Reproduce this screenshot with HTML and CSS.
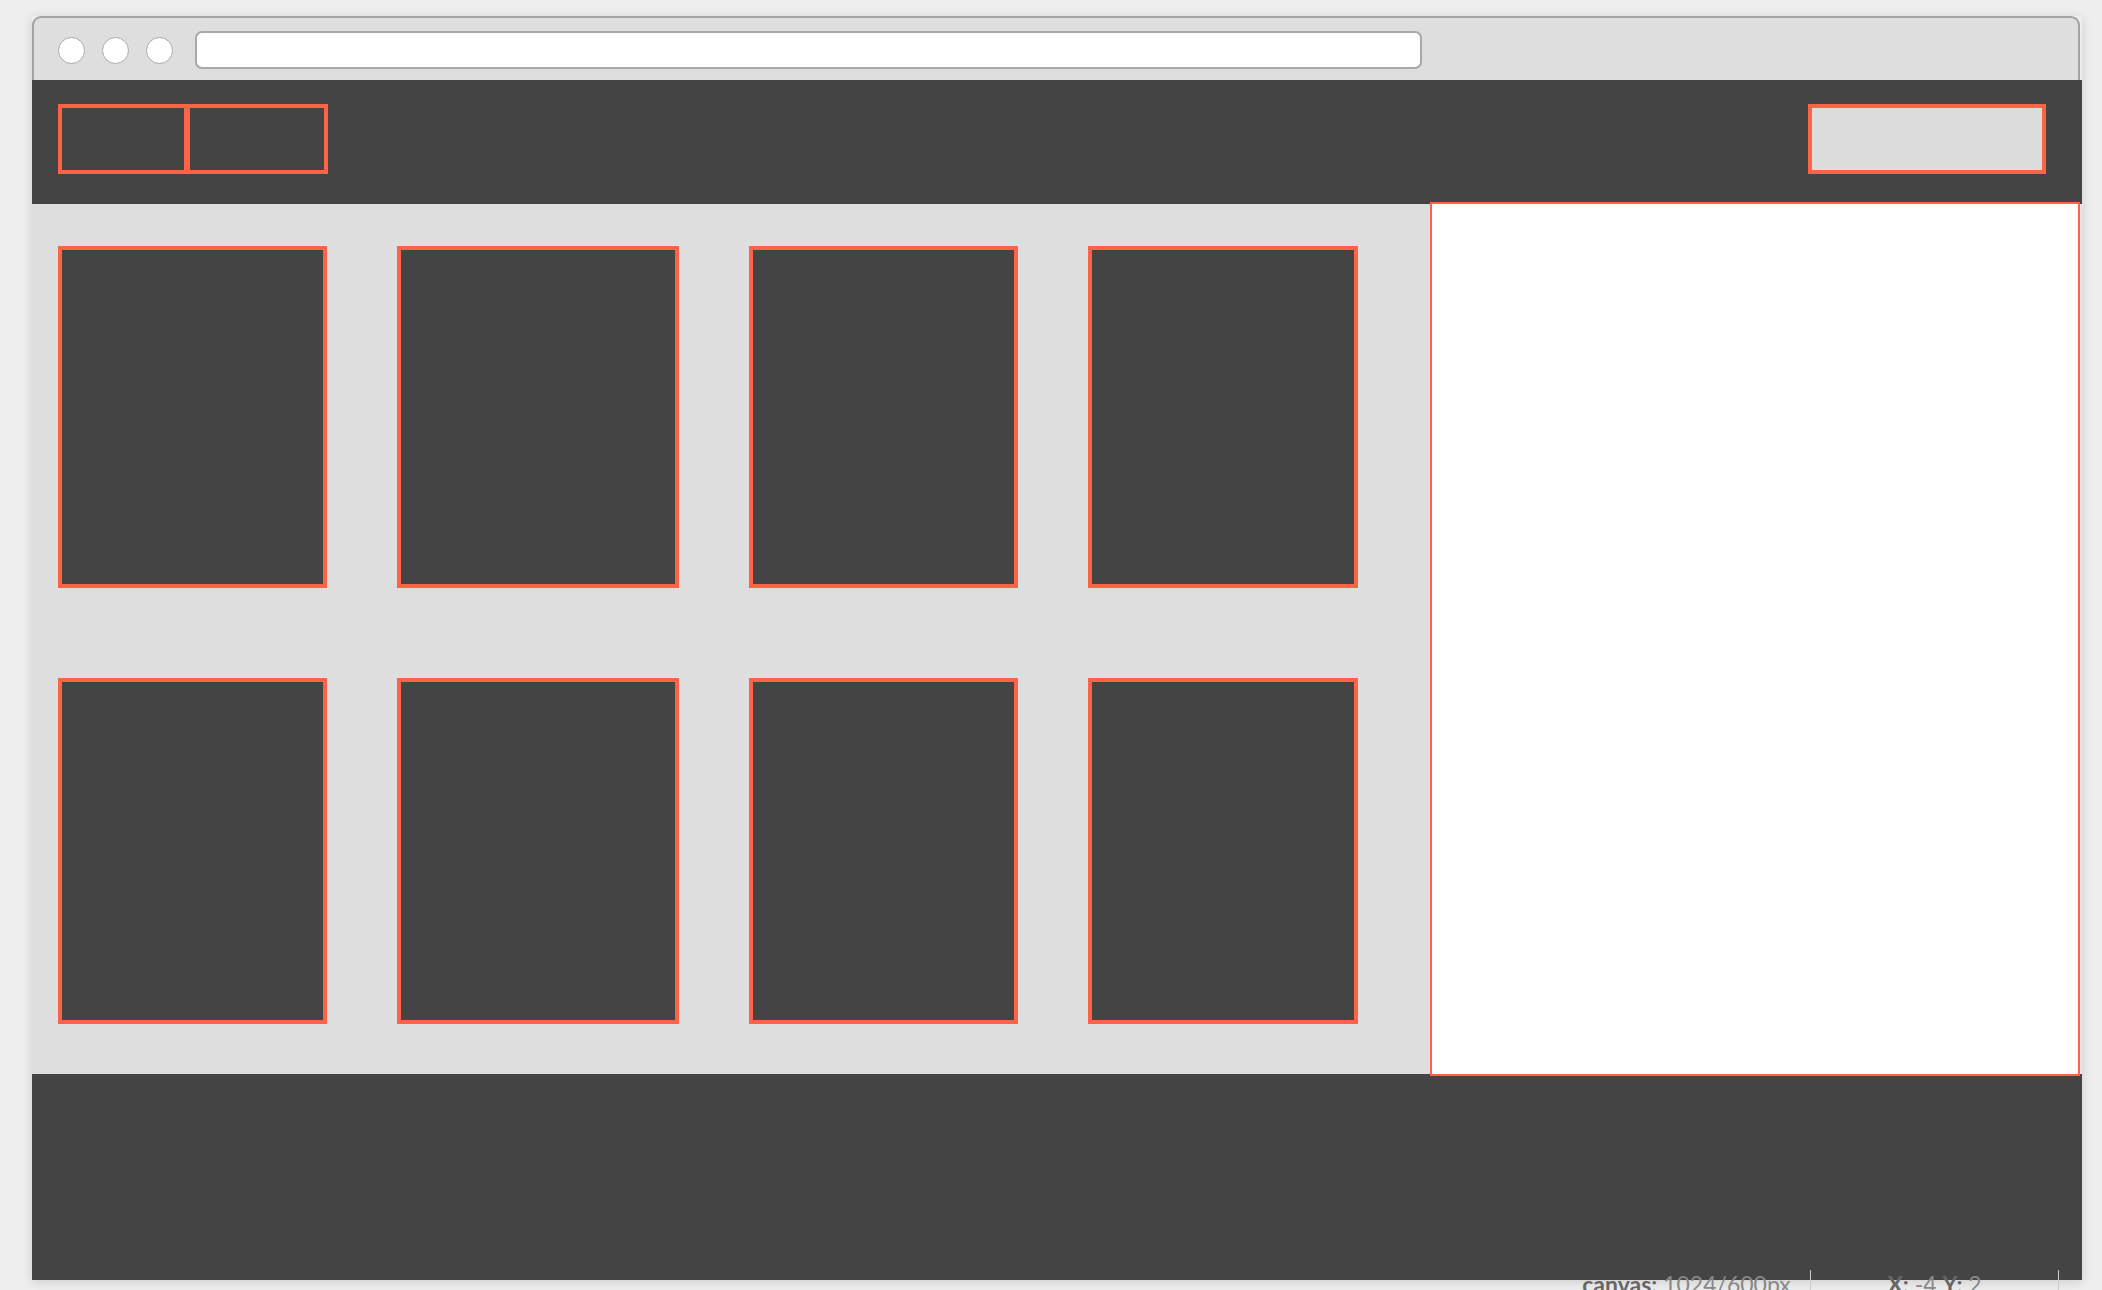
FILE: index.html
```html
<!DOCTYPE html>
<html lang="en">
  <head>
    <meta charset="UTF-8" />
    <title>Wireframe</title>
    <link rel="stylesheet" href="styles.css">
  </head>
  <body>
    <div class="window">
      <div class="titlebar">
        <span class="dot"></span>
        <span class="dot"></span>
        <span class="dot"></span>
        <div class="address"></div>
      </div>

      <header class="topbar">
        <nav class="tabs">
          <span class="tab"></span>
          <span class="tab second"></span>
        </nav>
        <span class="action"></span>
      </header>

      <div class="content">
        <main class="grid">
          <div class="card"></div>
          <div class="card"></div>
          <div class="card"></div>
          <div class="card"></div>
          <div class="card"></div>
          <div class="card"></div>
          <div class="card"></div>
          <div class="card"></div>
        </main>
        <aside class="panel"></aside>
      </div>

      <footer class="bottom"></footer>
    </div>

    <div class="status">
      <span class="status-item"><b>canvas:</b> 1024/600px</span>
      <span class="status-item"><b>X:</b> -4 <b>Y:</b> 2</span>
    </div>
  </body>
</html>
```

FILE: styles.css
```css
* {
  margin: 0;
  padding: 0;
  box-sizing: border-box;
}

html,
body {
  height: 100%;
  overflow: hidden;
  background: #eeeeee;
  font-family: Lato, "Open Sans", sans-serif;
}

.window {
  width: 2050px;
  margin: 16px 0 0 32px;
  box-shadow: 0 2px 10px rgba(0, 0, 0, 0.14);
}

.titlebar {
  display: flex;
  align-items: center;
  width: 2048px;
  height: 64px;
  padding: 2px 0 0 24px;
  background: #dedede;
  border: 2px solid #a3a3a3;
  border-bottom: none;
  border-radius: 9px 9px 0 0;
}

.dot {
  width: 27px;
  height: 27px;
  margin-right: 17px;
  background: white;
  border: 1.5px solid #aaaaaa;
  border-radius: 50%;
}

.dot:nth-child(3) {
  margin-right: 22px;
}

.address {
  width: 1227px;
  height: 38px;
  background: white;
  border: 2px solid #a8a8a8;
  border-radius: 7px;
}

.topbar {
  display: flex;
  justify-content: space-between;
  align-items: flex-start;
  height: 124px;
  padding: 24px 36px 0 26px;
  background: #444444;
}

.tabs {
  display: flex;
}

.tab {
  width: 130px;
  height: 70px;
  border: 4px solid #ff6347;
}

.tab.second {
  width: 142px;
  margin-left: -2px;
}

.action {
  width: 238px;
  height: 70px;
  background: #dcdcdc;
  border: 4px solid #ff6347;
}

.content {
  display: flex;
  height: 870px;
  background: #e6e6e6;
}

.grid {
  flex: 1;
  display: grid;
  grid-template-columns: 269px 282px 269px 270px;
  grid-template-rows: 342px 346px;
  column-gap: 70px;
  row-gap: 90px;
  padding: 42px 0 0 26px;
  background: #dedede;
}

.card {
  background: #444444;
  border: 4px solid #ff6347;
}

.panel {
  position: relative;
  z-index: 1;
  width: 650px;
  height: 874px;
  margin: -2px 2px 0 0;
  background: white;
  border: 2px solid #ff6347;
}

.bottom {
  height: 206px;
  background: #444444;
}

.status {
  display: flex;
  margin: -10px 0 0 1563px;
  font-size: 23px;
  line-height: 28px;
  color: #888888;
}

.status-item {
  display: inline-block;
  width: 248px;
  text-align: center;
  border-right: 1px solid #cccccc;
}

.status-item b {
  font-weight: bold;
  color: #666666;
}
```
